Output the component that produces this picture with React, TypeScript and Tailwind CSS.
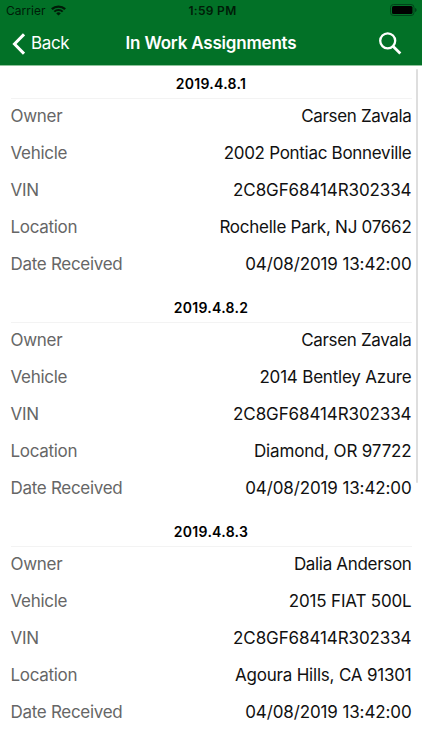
const assignments = [
  {
    id: "2019.4.8.1",
    rows: [
      ["Owner", "Carsen Zavala", "tracking-[-0.35px]"],
      ["Vehicle", "2002 Pontiac Bonneville", "tracking-[-0.29px]"],
      ["VIN", "2C8GF68414R302334", "tracking-[-0.1px]"],
      ["Location", "Rochelle Park, NJ 07662", "tracking-[-0.26px]"],
      ["Date Received", "04/08/2019 13:42:00", "tracking-[-0.12px]"],
    ],
  },
  {
    id: "2019.4.8.2",
    rows: [
      ["Owner", "Carsen Zavala", "tracking-[-0.35px]"],
      ["Vehicle", "2014 Bentley Azure", "tracking-[-0.2px]"],
      ["VIN", "2C8GF68414R302334", "tracking-[-0.1px]"],
      ["Location", "Diamond, OR 97722", "tracking-[-0.17px]"],
      ["Date Received", "04/08/2019 13:42:00", "tracking-[-0.12px]"],
    ],
  },
  {
    id: "2019.4.8.3",
    rows: [
      ["Owner", "Dalia Anderson", "tracking-[-0.32px]"],
      ["Vehicle", "2015 FIAT 500L", "tracking-[-0.18px]"],
      ["VIN", "2C8GF68414R302334", "tracking-[-0.1px]"],
      ["Location", "Agoura Hills, CA 91301", "tracking-[-0.2px]"],
      ["Date Received", "04/08/2019 13:42:00", "tracking-[-0.12px]"],
    ],
  },
];

function StatusBar() {
  return (
    <div className="grid h-[21px] grid-cols-3 items-center pl-[6px] pr-[5px] text-[12px] text-[#001c08]">
      <div className="flex items-center gap-[5px]">
        <span className="tracking-[0.05px]">Carrier</span>
        <svg className="h-[11px] w-[15px]" viewBox="0 0 14 11" preserveAspectRatio="none" fill="none" stroke="#001c08">
          <path d="M0.8 4.1a8.8 8.8 0 0 1 12.4 0" strokeWidth="2.2" />
          <path d="M3.1 6.6a5.5 5.5 0 0 1 7.8 0" strokeWidth="1.9" />
          <path d="M7 10.6 4.9 8.4a3 3 0 0 1 4.200 0z" fill="#001c08" stroke="none" />
        </svg>
      </div>
      <span className="pl-[2px] text-center font-semibold tracking-[0.3px]">1:59 PM</span>
      <svg className="mb-px h-3 w-[27px] justify-self-end" viewBox="0 0 27 12">
        <rect x="0.5" y="0.5" width="23.5" height="11" rx="3" fill="none" stroke="#00431a" />
        <rect x="2" y="2" width="20.5" height="8" rx="1.5" fill="#000" />
        <path d="M25 4v4c1-.3 1.6-1 1.6-2S26 4.3 25 4z" fill="#00431a" />
      </svg>
    </div>
  );
}

function NavBar() {
  return (
    <div className="grid h-[44px] grid-cols-[1fr_auto_1fr] items-center px-3 pt-px text-white">
      <button className="flex items-center gap-[6px] text-[17px] tracking-[-0.35px]">
        <svg className="h-[22px] w-[13px]" viewBox="0 0 13 22" fill="none" stroke="#fff" strokeWidth="3">
          <path d="M12 1.3 2.5 11l9.500 9.700" />
        </svg>
        <span className="pt-px">Back</span>
      </button>
      <h1 className="pt-px text-[17px] font-semibold tracking-[-0.2px]">In Work Assignments</h1>
      <svg className="mr-2 h-6 w-6 justify-self-end" viewBox="0 0 24 24" fill="none" stroke="#fff">
        <circle cx="9.7" cy="8.8" r="7.5" strokeWidth="2.300" />
        <path d="M15 14.200 22.300 21.500" strokeWidth="2.800" />
      </svg>
    </div>
  );
}

export default function App() {
  return (
    <div className="relative flex h-[750px] w-[422px] flex-col overflow-hidden bg-white font-['Inter',sans-serif]">
      <header className="border-b border-[#8fc39c] bg-[#027127]">
        <StatusBar />
        <NavBar />
      </header>
      <main className="-mt-[6px] px-[10.5px]">
        {assignments.map((item) => (
          <section key={item.id} className="pb-px">
            <h2 className="flex h-[39px] items-end justify-center border-b border-[#f3f3f3] pb-[4px] text-[14px] leading-5 font-semibold tracking-[0.28px] text-black">
              {item.id}
            </h2>
            <dl className="-mt-px">
              {item.rows.map(([label, value, tracking]) => (
                <div key={label} className="flex h-[37px] items-center justify-between text-[17px]">
                  <dt className="tracking-[-0.3px] text-[#666]">{label}</dt>
                  <dd className={`text-[#111] ${tracking}`}>{value}</dd>
                </div>
              ))}
            </dl>
          </section>
        ))}
      </main>
      {/* scroll indicator */}
      <div className="absolute top-[69px] right-[4px] h-[414px] w-[2px] rounded-full bg-[#dedede]" />
    </div>
  );
}
